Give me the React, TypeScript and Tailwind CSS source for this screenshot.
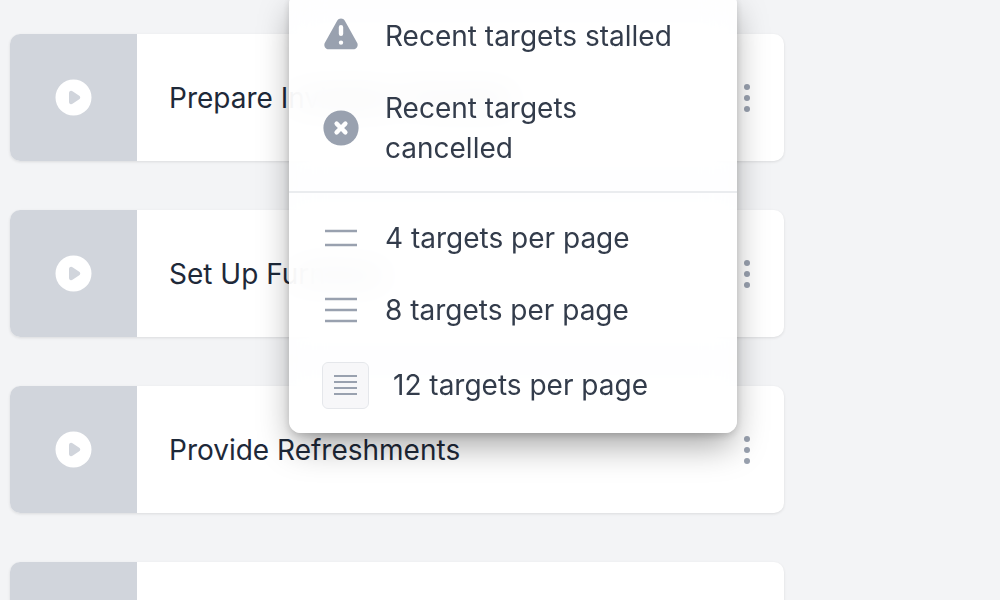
const PLAY = "M10 18a8 8 0 100-16 8 8 0 000 16zM9.555 7.168A1 1 0 008 8v4a1 1 0 001.555.832l3-2a1 1 0 000-1.664l-3-2z";
const WARN = "M8.257 3.099c.765-1.36 2.722-1.36 3.486 0l5.58 9.92c.75 1.334-.213 2.98-1.742 2.98H4.42c-1.53 0-2.493-1.646-1.743-2.98l5.58-9.92zM11 13a1 1 0 11-2 0 1 1 0 012 0zm-1-8a1 1 0 00-1 1v3a1 1 0 002 0V6a1 1 0 00-1-1z";
const XC = "M10 18a8 8 0 100-16 8 8 0 000 16zM8.707 7.293a1 1 0 00-1.414 1.414L8.586 10l-1.293 1.293a1 1 0 101.414 1.414L10 11.414l1.293 1.293a1 1 0 001.414-1.414L11.414 10l1.293-1.293a1 1 0 00-1.414-1.414L10 8.586 8.707 7.293z";

function Solid({ d, className }: { d: string; className: string }) {
  return (
    <svg viewBox="0 0 20 20" fill="currentColor" className={className}>
      <path fillRule="evenodd" clipRule="evenodd" d={d} />
    </svg>
  );
}

function Row({ title }: { title?: string }) {
  return (
    <div className="flex h-[127px] shrink-0 overflow-hidden rounded-[10px] bg-white shadow-[0_1px_3px_rgba(0,0,0,0.1)]">
      <div className="flex w-[127px] shrink-0 items-center justify-center bg-gray-300 pr-px">
        <Solid d={PLAY} className="h-[45px] w-[45px] text-white" />
      </div>
      <div className="flex flex-1 items-center justify-between pl-[32px] pr-[33px]">
        <span className="text-[28px] leading-10 text-gray-800">{title}</span>
        {title && (
          <svg viewBox="0 0 8 30" className="h-[30px] w-2 text-gray-400" fill="currentColor">
            <circle cx="4" cy="4" r="3" />
            <circle cx="4" cy="15" r="3" />
            <circle cx="4" cy="26" r="3" />
          </svg>
        )}
      </div>
    </div>
  );
}

function Lines({ ys }: { ys: number[] }) {
  return (
    <svg viewBox="0 0 44 44" className="h-11 w-11 shrink-0 text-gray-400" fill="none" stroke="currentColor" strokeWidth="2.5">
      {ys.map((y) => (
        <line key={y} x1="6" x2="38" y1={y} y2={y} />
      ))}
    </svg>
  );
}

function Item({ icon, children }: { icon: React.ReactNode; children: React.ReactNode }) {
  return (
    <div className="flex items-center py-4 pl-[30px]">
      <div className="mr-[22px] flex h-10 w-11 shrink-0 items-center justify-center">{icon}</div>
      <span className="w-[300px] text-[28px] leading-10 text-[#333c4b]">{children}</span>
    </div>
  );
}

export default function App() {
  return (
    <div className="relative h-[600px] w-[1000px] overflow-hidden bg-gray-100 font-['Inter',sans-serif]">
      <div className="ml-[10px] flex w-[774px] flex-col gap-[49px] pt-[34px]">
        <Row title="Prepare Invitation Packets" />
        <Row title="Set Up Furniture" />
        <Row title="Provide Refreshments" />
        <Row />
      </div>

      <div className="absolute left-[289px] top-[-8px] w-[448px] rounded-xl bg-white/90 pb-3 pt-2 shadow-[0_16px_34px_-4px_rgba(0,0,0,0.36),0_3px_8px_-1px_rgba(0,0,0,0.18)] backdrop-blur-lg">
        <Item icon={<Solid d={WARN} className="h-11 w-11 shrink-0 text-gray-400" />}>Recent targets stalled</Item>
        <Item icon={<Solid d={XC} className="h-11 w-11 shrink-0 text-gray-400" />}>Recent targets cancelled</Item>
        <div className="mb-[9px] mt-[7px] h-0.5 bg-gray-200/80" />
        <Item icon={<Lines ys={[15, 29]} />}>4 targets per page</Item>
        <Item icon={<Lines ys={[11, 22, 33]} />}>8 targets per page</Item>
        <div className="mt-[3px] flex h-[72px] items-center pl-[33px]">
          <div className="mr-6 flex h-[47px] w-[47px] shrink-0 flex-col items-center justify-center gap-1 rounded-md border border-gray-200 bg-gray-100/70">
            <div className="h-0.5 w-[23px] bg-gray-400" />
            <div className="h-0.5 w-[23px] bg-gray-400" />
            <div className="h-0.5 w-[23px] bg-gray-400" />
            <div className="h-0.5 w-[23px] bg-gray-400" />
          </div>
          <span className="text-[28px] leading-10 text-[#333c4b]">12 targets per page</span>
        </div>
      </div>
    </div>
  );
}
